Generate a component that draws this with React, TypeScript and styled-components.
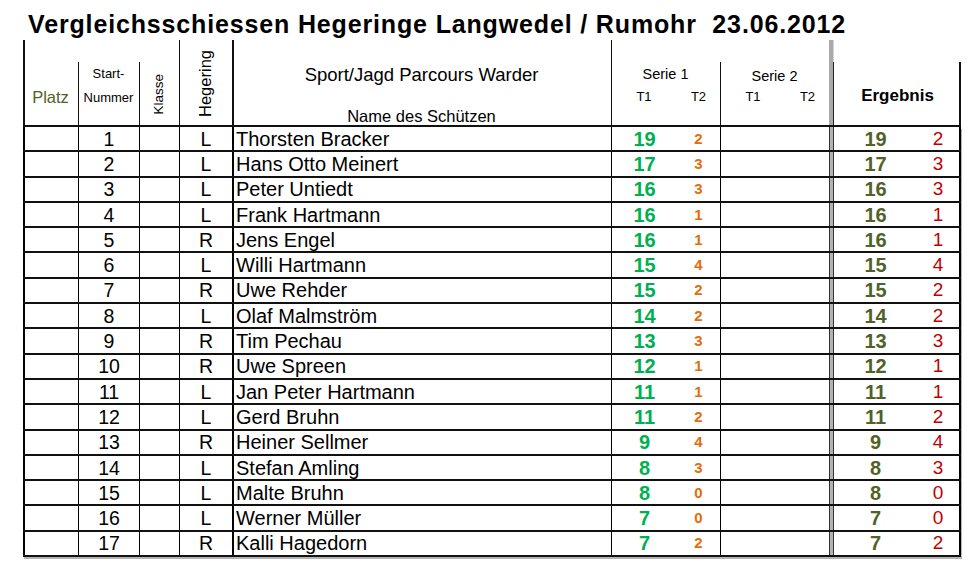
import React from "react";
import styled, { createGlobalStyle } from "styled-components";

const COLS = "55px 61px 40px 53px 379px 66px 43px 66px 43px 5px 83px 44px";
const SHORT = 22;

type Line = "full" | "short" | "none";
type Tone = "t1" | "t2" | "e1" | "e2";

const rows: [number, string, string, number, number][] = [
  [1, "L", "Thorsten Bracker", 19, 2],
  [2, "L", "Hans Otto Meinert", 17, 3],
  [3, "L", "Peter Untiedt", 16, 3],
  [4, "L", "Frank Hartmann", 16, 1],
  [5, "R", "Jens Engel", 16, 1],
  [6, "L", "Willi Hartmann", 15, 4],
  [7, "R", "Uwe Rehder", 15, 2],
  [8, "L", "Olaf Malmström", 14, 2],
  [9, "R", "Tim Pechau", 13, 3],
  [10, "R", "Uwe Spreen", 12, 1],
  [11, "L", "Jan Peter Hartmann", 11, 1],
  [12, "L", "Gerd Bruhn", 11, 2],
  [13, "R", "Heiner Sellmer", 9, 4],
  [14, "L", "Stefan Amling", 8, 3],
  [15, "L", "Malte Bruhn", 8, 0],
  [16, "L", "Werner Müller", 7, 0],
  [17, "R", "Kalli Hagedorn", 7, 2],
];

const Global = createGlobalStyle`
  html, body { margin: 0; padding: 0; background: #fff; }
  body { font-family: "Liberation Sans", Arial, Helvetica, sans-serif; color: #000; }
`;

const Page = styled.main`
  box-sizing: border-box;
  width: 978px;
  height: 563px;
  padding: 10px 0 0 23px;
  overflow: hidden;
`;

const Title = styled.h1`
  margin: 0 0 2px 5px;
  font-size: 25px;
  line-height: 28px;
  font-weight: bold;
  letter-spacing: 0.85px;
  white-space: pre;
`;

const Sheet = styled.section`
  width: 938px;
`;

const Header = styled.div`
  display: grid;
  grid-template-columns: ${COLS};
  height: 87px;
  box-sizing: border-box;
  border-bottom: 2px solid #111;
`;

const line = (edge: "left" | "right", kind: Line, w: number) =>
  kind === "none"
    ? ""
    : `linear-gradient(#111, #111) ${edge} ${kind === "short" ? SHORT : 0}px / ${w}px ${
        kind === "short" ? `calc(100% - ${SHORT}px)` : "100%"
      } no-repeat`;

const HeadCell = styled.div<{
  $left?: Line;
  $lw?: number;
  $right?: Line;
  $span?: number;
  $pt?: number;
  $pb?: number;
  $end?: boolean;
}>`
  grid-column: span ${(p) => p.$span ?? 1};
  display: flex;
  flex-direction: column;
  align-items: center;
  justify-content: ${(p) => (p.$end ? "flex-end" : "flex-start")};
  box-sizing: border-box;
  padding-top: ${(p) => p.$pt ?? 0}px;
  padding-bottom: ${(p) => p.$pb ?? 0}px;
  background: ${(p) =>
    [line("left", p.$left ?? "none", p.$lw ?? 1), line("right", p.$right ?? "none", 2)]
      .filter(Boolean)
      .join(", ") || "none"};
`;

const SepHead = styled.div`
  background:
    linear-gradient(#222, #222) 4px ${SHORT}px / 1px calc(100% - ${SHORT}px) no-repeat,
    linear-gradient(#d4d4d4, #d4d4d4) 4px 0 / 1px ${SHORT}px no-repeat,
    linear-gradient(#a9a9a9, #a9a9a9) 0 0 / 4px 100% no-repeat;
`;

const HLabel = styled.span<{ $size: number; $lh: number; $bold?: boolean; $color?: string; $mt?: number }>`
  display: block;
  font-size: ${(p) => p.$size}px;
  line-height: ${(p) => p.$lh}px;
  font-weight: ${(p) => (p.$bold ? "bold" : "normal")};
  color: ${(p) => p.$color ?? "#000"};
  margin-top: ${(p) => p.$mt ?? 0}px;
  white-space: nowrap;
`;

const VLabel = styled.span<{ $size: number }>`
  writing-mode: vertical-rl;
  transform: rotate(180deg);
  font-size: ${(p) => p.$size}px;
  line-height: 1;
  white-space: nowrap;
`;

const SubHead = styled.div<{ $mt: number }>`
  display: grid;
  grid-template-columns: 66px 43px;
  margin-top: ${(p) => p.$mt}px;
  width: 109px;
`;

const SubLabel = styled.span`
  text-align: center;
  font-size: 13px;
  line-height: 15px;
`;

const Body = styled.div`
  box-shadow: 1px 2px 0 #b4b4b4;
`;

const Row = styled.div`
  display: grid;
  grid-template-columns: ${COLS};
  height: 25.3px;
  box-sizing: border-box;
  border-bottom: 2px solid #111;
`;

const Cell = styled.div<{ $lw?: number; $rw?: number; $start?: boolean }>`
  display: flex;
  align-items: center;
  justify-content: ${(p) => (p.$start ? "flex-start" : "center")};
  box-sizing: border-box;
  padding-left: ${(p) => (p.$start ? 2 : 0)}px;
  border-left: ${(p) => p.$lw ?? 0}px solid #000;
  border-right: ${(p) => p.$rw ?? 0}px solid #000;
  font-size: 19.5px;
  line-height: 22px;
  white-space: nowrap;
  overflow: hidden;
`;

const NameText = styled.span`
  font-size: 20px;
`;

const SepCell = styled.div`
  border-left: 1px solid #333;
  border-right: 1px solid #333;
  background: #b3b3b3;
`;

const toneStyle: Record<Tone, string> = {
  t1: "color: #00b050; font-weight: bold; font-size: 20px;",
  t2: "color: #e46c0a; font-weight: bold; font-size: 15px;",
  e1: "color: #4f6228; font-weight: bold; font-size: 20px;",
  e2: "color: #c00000; font-weight: normal; font-size: 19px;",
};

const Score = styled.span<{ $tone: Tone }>`
  ${(p) => toneStyle[p.$tone]}
`;

export default function App() {
  return (
    <Page>
      <Global />
      <Title>{"Vergleichsschiessen Hegeringe Langwedel / Rumohr  23.06.2012"}</Title>
      <Sheet>
        <Header>
          <HeadCell $left="full" $lw={2} $pt={48}>
            <HLabel $size={16.5} $lh={18} $color="#4f6228">Platz</HLabel>
          </HeadCell>
          <HeadCell $left="short" $pt={26}>
            <HLabel $size={13} $lh={16}>Start-</HLabel>
            <HLabel $size={13} $lh={16} $mt={7.5}>Nummer</HLabel>
          </HeadCell>
          <HeadCell $left="short" $end $pb={10}>
            <VLabel $size={13.5}>Klasse</VLabel>
          </HeadCell>
          <HeadCell $left="full" $end $pb={8}>
            <VLabel $size={16.5}>Hegering</VLabel>
          </HeadCell>
          <HeadCell $left="full" $lw={2} $pt={25}>
            <HLabel $size={18.5} $lh={20}>Sport/Jagd Parcours Warder</HLabel>
            <HLabel $size={16.5} $lh={18} $mt={22}>Name des Schützen</HLabel>
          </HeadCell>
          <HeadCell $left="full" $span={2} $pt={26}>
            <HLabel $size={14.5} $lh={16}>Serie 1</HLabel>
            <SubHead $mt={7}>
              <SubLabel>T1</SubLabel>
              <SubLabel>T2</SubLabel>
            </SubHead>
          </HeadCell>
          <HeadCell $left="short" $span={2} $pt={28}>
            <HLabel $size={14.5} $lh={16}>Serie 2</HLabel>
            <SubHead $mt={5}>
              <SubLabel>T1</SubLabel>
              <SubLabel>T2</SubLabel>
            </SubHead>
          </HeadCell>
          <SepHead />
          <HeadCell $right="short" $span={2} $pt={46}>
            <HLabel $size={17} $lh={20} $bold>Ergebnis</HLabel>
          </HeadCell>
        </Header>
        <Body>
          {rows.map(([nr, ring, name, t1, t2]) => (
            <Row key={nr}>
              <Cell $lw={2} />
              <Cell $lw={1}>{nr}</Cell>
              <Cell $lw={1} />
              <Cell $lw={1}>{ring}</Cell>
              <Cell $lw={2} $start>
                <NameText>{name}</NameText>
              </Cell>
              <Cell $lw={1}>
                <Score $tone="t1">{t1}</Score>
              </Cell>
              <Cell>
                <Score $tone="t2">{t2}</Score>
              </Cell>
              <Cell $lw={1} />
              <Cell />
              <SepCell />
              <Cell>
                <Score $tone="e1">{t1}</Score>
              </Cell>
              <Cell $rw={2}>
                <Score $tone="e2">{t2}</Score>
              </Cell>
            </Row>
          ))}
        </Body>
      </Sheet>
    </Page>
  );
}
